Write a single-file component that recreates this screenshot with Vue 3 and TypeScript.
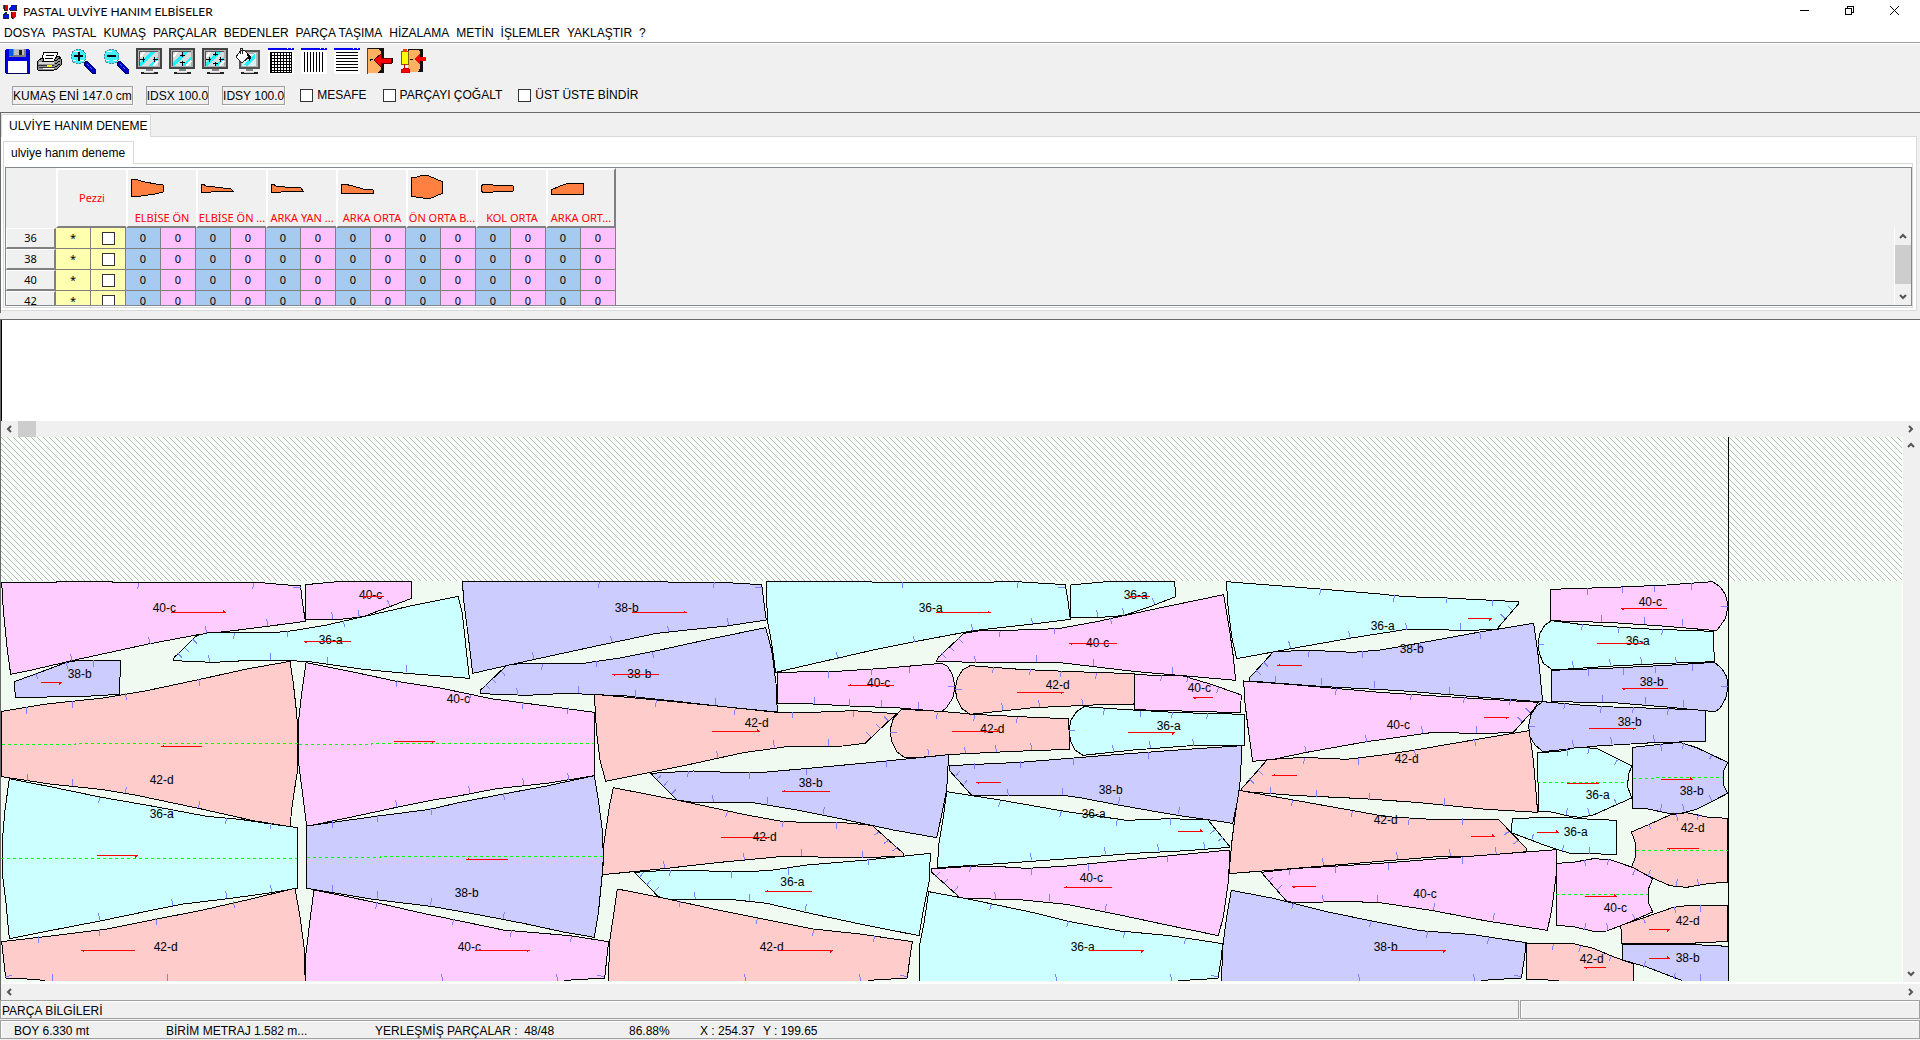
<script setup lang="ts">
type Size = '36-a' | '38-b' | '40-c' | '42-d'

interface Piece {
  size: Size
  outline: string
  label: [number, number]
  // tail x, y, head x, barb side (-1 above, 1 below)
  grain: [number, number, number, number]
  notches: string
  fold?: string
}

interface Strip {
  x: number
  pieces: Piece[]
}

interface GarmentPart {
  name: string
  outline: string
}

const fills: Record<Size, string> = {
  '36-a': '#ccffff',
  '38-b': '#ccccff',
  '40-c': '#ffccff',
  '42-d': '#ffcccc',
}

const menus = ['DOSYA', 'PASTAL', 'KUMAŞ', 'PARÇALAR', 'BEDENLER', 'PARÇA TAŞIMA', 'HİZALAMA', 'METİN', 'İŞLEMLER', 'YAKLAŞTIR', '?']
const readouts = ['KUMAŞ ENİ 147.0 cm', 'IDSX 100.0', 'IDSY 100.0']
const options = ['MESAFE', 'PARÇAYI ÇOĞALT', 'ÜST ÜSTE BİNDİR']
const sizes = ['36', '38', '40', '42']

const parts: GarmentPart[] = [
  { name: 'ELBİSE ÖN', outline: '0,7 1,5 3,5 14,8 25,10 32,11 32,18 24,20 10,22 1,23 0,22' },
  { name: 'ELBİSE ÖN ...', outline: '0,11 2,10 5,12 14,13 30,15 32,17 20,17 10,18 0,19' },
  { name: 'ARKA YAN ...', outline: '0,11 2,10 5,12 14,13 30,14 32,17 20,17 10,18 0,19' },
  { name: 'ARKA ORTA', outline: '0,11 3,10 12,12 22,15 32,16 32,19 0,19' },
  { name: 'ÖN ORTA B...', outline: '0,3 6,3 12,1 18,2 32,8 31,12 31,15 32,19 18,25 12,24 5,23 0,22' },
  { name: 'KOL ORTA', outline: '3,10 0,12 0,17 3,19 12,18 32,17 32,12 12,11' },
  { name: 'ARKA ORT...', outline: '0,16 9,12 18,9 32,9 32,20 20,20 1,21' },
]

const displayArrows = [
  { title: 'Yatay sığdır', d: 'M4 11h5M7 9v5M22 11h-5M18 9v5' },
  { title: 'Dikey sığdır', d: 'M13 4v5M11 7h5M13 18v-5M11 14h5' },
  { title: 'Tümünü sığdır', d: 'M4 11h5M7 9v5M22 11h-5M18 9v5M13 4v4M11 6h5M13 18v-4M11 15h5' },
]

const ruledLines = [4, 7, 10, 13, 16, 19, 22]

// Marker plan: 3 plan units per screen pixel, four side-by-side strips.
const strips: Strip[] = [
  {
    x: 0,
    pieces: [
      { size: '40-c', outline: '5,37 168,37 168,34 336,34 336,37 783,38 828,42 876,46 902,48 905,80 916,154 810,168 700,182 600,193 445,222 220,271 100,299 32,313 22,240 10,120', label: [458, 125], grain: [514, 127, 675, -1], notches: 'M416 38l-3 18M761 38l-3 18M880 52h22M800 148l4 20M616 169l4 20M446 202l5 20M212 253l4 20' },
      { size: '40-c', outline: '916,44 1014,35 1235,35 1235,85 1140,121 1090,140 1020,148 916,148', label: [1077, 88], grain: [1152, 79, 1090, 1], notches: 'M995 126l3 20M1074 121l4 20M1162 90l8 18' },
      { size: '36-a', outline: '590,197 625,188 820,188 880,182 980,165 1090,140 1240,106 1374,79 1387,130 1408,325 1220,310 1090,298 930,275 870,272 735,272 640,277 560,274 520,271 523,262', label: [956, 223], grain: [1053, 214, 913, 1], notches: 'M704 188l-4 18M863 182v18M1030 152l4 18M578 208l13 13M554 233l13 12M533 250l13 13M625 255l4 20M811 250v20M982 262v20M1219 286v20' },
      { size: '38-b', outline: '43,335 120,307 200,277 240,271 362,271 358,373 240,380 46,382', label: [203, 323], grain: [123, 338, 183, 1], notches: 'M106 308l7 18M199 277l4 20M281 271v20' },
      { size: '42-d', outline: '5,424 140,402 310,384 440,362 600,328 740,297 870,274 880,340 890,430 893,480 893,600 885,650 876,710 870,770 760,752 600,716 410,676 310,659 150,642 5,620', label: [449, 641], grain: [606, 529, 487, -1], notches: 'M80 412v20M218 394v20M376 370l4 20M596 328l4 20M82 612v20M218 628v20M379 650l-3 20M599 694l-4 20', fold: 'M5 523H226V520H893' },
      { size: '40-c', outline: '918,278 1050,304 1190,334 1325,355 1440,379 1480,387 1640,408 1783,427 1783,617 1640,640 1490,656 1380,677 1300,690 1190,712 1060,740 920,769 905,650 896,580 896,450 905,370', label: [1340, 398], grain: [1182, 514, 1302, 1], notches: 'M1192 330l-4 20M1412 374l-4 20M1570 396l-3 20M1705 411l-3 20M1568 625l4 20M1703 610l4 20M1406 649l4 20M1187 690l4 20', fold: 'M896 523H1114V520H1783' },
      { size: '36-a', outline: '28,626 160,652 300,681 460,709 620,739 720,748 800,760 892,773 892,955 800,970 700,984 550,1002 440,1024 300,1053 160,1080 28,1106 18,1000 8,920 8,800 15,720', label: [449, 743], grain: [291, 857, 411, 1], notches: 'M300 680l-4 18M680 745l-4 18M814 760l-3 18M520 720l-4 18M295 1029l4 20M515 988l4 20M677 963l3 20M811 945l4 20', fold: 'M3 865H892' },
      { size: '38-b', outline: '920,768 1120,740 1290,718 1380,697 1510,672 1640,648 1783,617 1795,690 1807,780 1810,860 1807,910 1795,1030 1783,1102 1690,1086 1570,1060 1440,1035 1300,1010 1120,988 1000,968 920,955', label: [1364, 980], grain: [1524, 868, 1402, -1], notches: 'M997 754v20M1132 736v20M1292 714l3 20M1510 670l4 20M997 945v20M1132 963v20M1295 985l-4 20M1513 1026l-4 20', fold: 'M920 862H1140V859H1810' },
      { size: '42-d', outline: '5,1115 170,1096 320,1077 460,1049 600,1022 740,990 885,955 900,1040 912,1130 916,1240 140,1240 134,1231 80,1227 17,1224 12,1180', label: [461, 1143], grain: [405, 1142, 247, 1], notches: 'M116 1098v20M298 1078v20M467 1044l4 20M700 994l4 20M158 1212v20M502 1212v20M16 1221l20 -5' },
      { size: '40-c', outline: '942,960 1120,996 1260,1028 1380,1053 1510,1080 1710,1097 1826,1115 1822,1150 1814,1224 1695,1231 1690,1240 916,1240 918,1150 930,1050', label: [1373, 1143], grain: [1425, 1142, 1586, 1], notches: 'M1131 996l-4 20M1361 1046l-4 20M1535 1080l-4 20M1715 1097l-4 20M1324 1212l4 20M1669 1212l4 20M1791 1216l22 4' },
    ],
  },
  {
    x: 1380,
    pieces: [
      { size: '38-b', outline: '7,35 603,35 645,37 800,38 905,44 912,100 919,150 800,168 700,178 590,190 400,230 220,269 38,310 25,200 12,100', label: [464, 125], grain: [516, 127, 677, -1], notches: 'M418 35l-3 18M763 35l-3 18M884 52h21M802 145l4 20M622 167l5 20M451 197l6 20M217 247l5 20' },
      { size: '38-b', outline: '140,286 180,281 370,280 480,264 600,240 760,205 917,173 935,240 948,340 952,426 800,411 650,394 500,378 320,370 200,376 61,371 62,360', label: [502, 323], grain: [597, 314, 460, 1], notches: 'M248 281l-4 18M410 274v18M577 245l4 18M123 303l13 14M97 328l13 12M77 345l13 12M170 354l3 20M355 349v20M527 360v20M767 385v20' },
      { size: '36-a', outline: '919,35 1540,37 1670,35 1816,44 1825,100 1831,148 1720,162 1540,182 1380,212 1240,240 1100,272 947,307 935,220 922,150', label: [1376, 125], grain: [1428, 127, 1589, -1], notches: 'M1329 35l-3 18M1675 35l-4 18M1794 52h22M1714 143l4 20M1534 162l4 20M1360 197l4 20M1129 247l6 20' },
      { size: '40-c', outline: '953,307 1130,304 1270,295 1410,283 1445,280 1462,288 1478,315 1485,350 1478,385 1460,412 1445,425 1320,414 1170,408 1040,401 953,401', label: [1221, 351], grain: [1302, 346, 1168, -1], notches: 'M1105 304v20M1234 298v18M1348 290v18M1465 350h22M1063 380v22M1168 386v22M1265 390v22M1375 396v20' },
      { size: '42-d', outline: '403,373 590,390 820,413 950,427 1060,427 1180,422 1308,431 1300,440 1215,520 1150,528 980,530 850,548 690,583 437,634 420,570 410,490', label: [854, 471], grain: [756, 484, 897, -1], notches: 'M590 390l-4 20M826 414l-3 20M998 427v18M1181 422v18M1273 440l13 13M1249 463l14 13M1219 487l14 13M939 510l4 20M770 544l4 20M1105 507v22' },
      { size: '42-d', outline: '1325,418 1440,424 1560,434 1740,443 1826,446 1829,538 1660,544 1480,553 1380,562 1335,564 1310,545 1295,515 1290,480 1300,445', label: [1561, 488], grain: [1476, 484, 1615, -1], notches: 'M1290 488h20M1403 536l4 20M1513 530l4 20M1606 526l4 20M1712 519l3 20M1432 428l-3 18M1545 434l-4 18M1672 440l-3 20' },
      { size: '38-b', outline: '572,610 700,603 780,606 920,606 1080,592 1280,573 1466,554 1460,660 1444,740 1430,803 1300,780 1150,748 1000,718 880,698 700,697 650,690', label: [1016, 650], grain: [1110, 664, 970, -1], notches: 'M686 602l-4 18M868 607v20M1039 596v18M1279 570v20M590 628l14 -12M612 647l12 -14M635 672l13 -14M757 676l4 20M922 682v20M1093 712l-3 20' },
      { size: '42-d', outline: '460,653 650,690 860,735 970,755 1080,758 1160,759 1236,766 1330,850 1332,858 1220,863 1110,863 1040,859 960,860 780,877 620,895 428,914 432,820 448,710', label: [878, 812], grain: [783, 802, 922, 1], notches: 'M803 722l-6 18M970 754l-3 18M1129 757v20M1244 795l14 -10M1272 820l15 -10M1297 843l14 -10M850 850l4 20M1024 838v20M1207 844v20M611 874l3 20' },
      { size: '36-a', outline: '523,907 620,901 870,905 940,900 1040,885 1220,870 1411,850 1408,930 1390,1020 1377,1097 1200,1062 1050,1030 920,1000 820,989 620,987 595,980', label: [961, 947], grain: [1056, 964, 919, -1], notches: 'M632 901l-4 18M814 904v20M985 894v20M1225 868v18M540 920l12 -14M560 945l12 -14M583 966l13 -14M703 966l3 20M868 972v20M1039 1002l-3 20' },
      { size: '42-d', outline: '472,957 600,982 760,1017 900,1045 1060,1077 1200,1092 1357,1115 1350,1160 1342,1224 1225,1231 1220,1240 446,1240 448,1120 460,1040', label: [899, 1143], grain: [955, 1142, 1116, 1], notches: 'M661 994l-4 18M892 1045l-4 18M1061 1077l-3 20M1244 1098l-4 18M853 1212l4 20M1198 1212l4 20M1320 1216l22 4' },
    ],
  },
  {
    x: 2760,
    pieces: [
      { size: '36-a', outline: '452,45 550,36 764,35 767,80 690,110 610,137 540,142 452,142', label: [611, 88], grain: [690, 79, 628, 1], notches: 'M530 120l3 20M608 115l4 20M696 84l9 18' },
      { size: '40-c', outline: '132,190 180,182 350,179 420,175 530,155 680,122 911,74 930,190 940,260 947,331 800,318 640,304 430,279 200,278 49,274 55,262', label: [498, 230], grain: [591, 220, 450, 1], notches: 'M241 182l-4 18M404 175v18M571 145l4 18M115 204l13 14M89 230l13 12M65 250l12 13M163 258l4 20M349 255v22M520 267v22M757 291v22' },
      { size: '42-d', outline: '150,287 300,298 460,305 643,311 642,402 520,405 340,413 150,433 125,415 110,385 106,355 112,325 128,300', label: [377, 356], grain: [291, 367, 429, 1], notches: 'M105 357h20M221 292l-4 18M332 298l-4 18M424 304l-3 18M530 308l-4 18M245 400l4 20M356 391l3 20M485 386l4 20' },
      { size: '40-c', outline: '643,314 790,318 880,345 964,375 961,428 643,419', label: [803, 367], grain: [879, 382, 820, 1], notches: 'M725 314l-3 18M806 320l-6 16M896 350l-6 18' },
      { size: '36-a', outline: '492,410 620,419 780,428 973,433 973,526 800,528 640,540 489,556 465,540 452,515 447,482 453,450 470,425', label: [710, 480], grain: [624, 488, 762, 1], notches: 'M446 481h19M553 416l-3 18M663 422l-3 18M758 426l-4 18M863 430l-3 16M577 524l4 20M688 514l4 20M818 507l3 20' },
      { size: '38-b', outline: '87,587 300,577 560,556 800,538 965,527 962,620 955,680 938,760 760,734 600,706 480,683 430,676 300,678 155,676 87,600', label: [536, 671], grain: [243, 637, 171, 1], notches: 'M163 580v18M301 573v20M461 565v20M686 546v20M108 618l10 -14M132 643l10 -14M262 658l4 20M428 655v20M599 682l-4 20M779 711l-4 20' },
      { size: '36-a', outline: '80,665 240,690 440,725 620,751 750,746 864,750 928,828 929,832 800,842 640,850 460,865 250,880 53,893 55,830 70,740', label: [485, 743], grain: [774, 784, 846, -1], notches: 'M241 692l-5 18M424 724l-5 18M592 748l-3 20M752 745v20M871 790l14 -10M894 813l14 -10M331 850l4 20M553 832l4 20M712 822l4 20M851 816l3 20' },
      { size: '40-c', outline: '33,897 170,888 240,890 320,895 430,889 560,876 740,858 929,840 926,930 910,1040 895,1097 750,1067 600,1035 440,1003 300,989 122,985 33,905', label: [479, 935], grain: [576, 952, 436, -1], notches: 'M152 889l-3 18M335 894v20M506 882v20M743 856v20M47 920l13 -14M70 942l13 -14M101 964l13 -14M224 966l3 20M389 972v20M559 1003l-3 20' },
      { size: '36-a', outline: '26,965 150,988 350,1030 450,1055 600,1083 750,1097 908,1121 903,1170 894,1225 777,1232 770,1240 -2,1240 0,1120 12,1060', label: [452, 1143], grain: [508, 1142, 669, 1], notches: 'M214 1003l-5 18M446 1054l-6 18M614 1085l-4 20M797 1105l-4 18M406 1212l4 20M751 1212l4 20M872 1216l22 4' },
      { size: '36-a', outline: '919,35 1200,57 1380,72 1455,80 1580,84 1795,95 1795,102 1730,178 1650,181 1460,178 1300,203 1130,233 950,266 935,200 925,120', label: [1352, 179], grain: [1644, 146, 1713, 1], notches: 'M1203 58l-5 18M1424 75l-4 20M1582 82l-4 18M1719 90l-3 18M1763 107l14 14M1742 132l14 14M1457 160l4 20M1621 158v22M1286 184l5 20M1106 214l6 20' },
      { size: '38-b', outline: '1060,245 1170,241 1300,247 1380,240 1440,230 1680,186 1841,160 1855,260 1868,396 1700,383 1440,362 1200,349 988,333 990,322', label: [1439, 248], grain: [1146, 286, 1075, -1], notches: 'M1168 242l-4 18M1328 244v20M1499 218l4 20M1679 187l4 20M1030 276l14 14M1009 302l14 13M1067 318v20M1204 325v20M1363 333v20M1588 350v22' },
      { size: '40-c', outline: '971,333 1120,344 1380,367 1640,384 1855,397 1840,420 1780,487 1690,491 1540,487 1340,515 1160,547 1060,568 998,574 985,480 975,400', label: [1400, 476], grain: [1692, 442, 1764, 1], notches: 'M1250 354l-4 20M1475 373l-4 18M1634 382l-4 18M1772 388l-4 18M1817 414l14 14M1792 441l14 14M1504 468l4 20M1669 468v22M1336 495l5 20M1154 527l5 20' },
      { size: '42-d', outline: '1042,569 1150,562 1280,568 1380,556 1480,541 1660,510 1828,482 1840,570 1853,727 1700,718 1500,698 1330,686 1120,676 962,664 966,655', label: [1424, 579], grain: [1131, 616, 1060, -1], notches: 'M1154 563l-4 18M1315 565v20M1483 540l5 20M1663 507l4 20M1015 600l13 14M988 626l14 14M1051 652v20M1189 660v20M1348 668v22M1573 685v22' },
      { size: '42-d', outline: '957,661 1120,690 1300,722 1400,740 1535,748 1735,748 1820,836 1820,845 1680,858 1540,861 1380,874 1150,893 927,911 935,820 945,740', label: [1361, 761], grain: [1654, 799, 1722, -1], notches: 'M1118 691l-5 18M1298 722l-5 18M1468 744l-3 20M1628 744v20M1753 795l15 -10M1780 822l14 -10M1207 865l4 20M1429 846l4 20M1588 838l4 20M1726 832l3 20' },
      { size: '40-c', outline: '1024,907 1130,895 1240,889 1380,880 1560,866 1740,852 1909,839 1908,920 1895,1020 1882,1081 1700,1053 1540,1022 1380,998 1300,995 1120,997 1100,994', label: [1480, 983], grain: [1188, 949, 1117, 1], notches: 'M1108 896v18M1246 888v20M1405 880v20M1627 862v20M1045 936l13 -14M1072 960l13 -14M1207 976l4 20M1373 976v20M1544 1000l-4 20M1723 1030l-3 20' },
      { size: '38-b', outline: '934,961 1060,985 1220,1025 1380,1058 1500,1082 1660,1094 1818,1118 1814,1160 1804,1224 1686,1231 1680,1240 905,1240 907,1140 920,1040', label: [1361, 1143], grain: [1414, 1142, 1575, 1], notches: 'M1120 1000l-5 18M1354 1052l-5 18M1523 1084l-4 20M1706 1103l-4 18M1315 1212l4 20M1660 1212l4 20M1782 1216l22 4' },
    ],
  },
  {
    x: 4140,
    pieces: [
      { size: '40-c', outline: '511,58 700,52 860,45 997,35 1020,50 1037,75 1044,108 1037,145 1010,182 860,169 700,158 511,152', label: [776, 107], grain: [861, 115, 724, 1], notches: 'M622 54v20M727 50v20M824 47v20M934 40v20M1024 109h20M665 136v20M793 142v20M907 148v20' },
      { size: '36-a', outline: '515,152 600,163 780,176 1000,184 1003,275 860,280 700,288 518,300 490,280 478,250 474,220 480,190 495,165', label: [737, 224], grain: [651, 220, 789, -1], notches: 'M475 223h18M608 163l-4 18M718 172l-3 18M848 178l-3 18M577 274l4 20M688 266l4 20M782 262l4 20M886 260l4 20' },
      { size: '38-b', outline: '515,301 700,294 860,286 1003,277 1025,295 1040,320 1044,350 1037,385 1020,415 1005,425 860,411 700,398 515,395', label: [779, 347], grain: [864, 355, 727, 1], notches: 'M626 298v20M731 294v20M827 290v18M938 282v20M1024 349h20M668 376v20M797 382v20M911 390v20' },
      { size: '38-b', outline: '488,395 600,405 700,411 860,416 977,421 977,514 820,518 650,528 489,545 465,525 450,500 446,468 452,435 470,408', label: [713, 467], grain: [627, 475, 765, 1], notches: 'M446 468h18M555 400l-4 18M665 408l-4 20M761 412l-4 18M866 414l-4 20M577 511l4 20M692 502l4 20M820 496l4 20' },
      { size: '36-a', outline: '473,548 540,544 590,532 650,535 755,588 745,615 743,650 755,684 640,735 600,742 560,737 510,725 475,723', label: [617, 686], grain: [561, 640, 653, -1], notches: 'M560 537l3 20M628 534l-5 18M712 570l-8 14M562 714l-3 20M623 714l5 20M703 687l7 16', fold: 'M472 637H742' },
      { size: '38-b', outline: '758,532 830,524 900,517 950,533 1043,577 1030,605 1030,645 1043,670 950,718 900,731 860,729 800,716 758,715', label: [899, 674], grain: [843, 628, 936, -1], notches: 'M841 522l4 20M911 520l-5 18M997 553l-8 14M845 703l-4 20M908 703l5 20M988 676l8 16', fold: 'M758 625H828V622H1030' },
      { size: '36-a', outline: '397,745 550,742 620,747 710,751 710,853 570,850 500,828 394,788', label: [551, 797], grain: [472, 787, 534, -1], notches: 'M460 793l-5 18M551 824l-4 20M628 831v20M372 794l14 -10' },
      { size: '42-d', outline: '754,786 810,762 870,735 920,728 980,741 1043,745 1043,937 990,940 920,952 870,947 820,925 754,892 767,860 767,820', label: [902, 785], grain: [957, 835, 864, 1], notches: 'M805 762l8 16M889 732l4 20M956 733l-4 18M805 918l6 -18M889 948l3 -20M952 926l4 20', fold: 'M767 841H1044' },
      { size: '40-c', outline: '529,880 580,877 640,866 690,869 760,893 818,926 804,960 804,995 818,1026 740,1060 680,1083 640,1084 580,1070 529,1066', label: [671, 1026], grain: [615, 979, 708, -1], notches: 'M613 869l4 20M686 868l-4 18M766 898l-8 18M617 1059l-3 20M680 1059l4 20M758 1032l7 16', fold: 'M529 973H804' },
      { size: '42-d', outline: '721,1067 800,1040 880,1012 930,1006 1043,1006 1043,1115 945,1118 945,1121 726,1121 724,1080', label: [887, 1064], grain: [807, 1079, 867, 1], notches: 'M790 1044l6 16M883 1012l4 18M962 1006v20' },
      { size: '42-d', outline: '440,1121 580,1121 640,1135 700,1160 760,1182 760,1240 540,1240 536,1231 440,1228', label: [599, 1178], grain: [678, 1192, 615, 1], notches: 'M520 1121l-3 20M602 1128l-6 18M695 1158l-8 16' },
      { size: '38-b', outline: '728,1124 945,1124 1044,1129 1044,1240 905,1240 905,1231 860,1214 800,1191 728,1170', label: [887, 1175], grain: [807, 1165, 867, -1], notches: 'M796 1174l-5 20M886 1208l-4 20M962 1212v20' },
    ],
  },
]

function grainPath([tail, y, head, side]: Piece['grain']): string {
  const back = head > tail ? -6 : 6
  return `M${tail} ${y}H${head}l${back} ${side * 5}`
}
</script>

<template>
  <div class="window">
    <header class="titlebar">
      <svg class="app-icon" width="14" height="16" viewBox="0 0 14 16" shape-rendering="crispEdges">
        <path d="M0 1h5v6H2L0 5z" fill="#e00000" /><path d="M6 4l2-2V1h5v5H6z" fill="#0018d8" /><path d="M0 10l2-2h2v2h2v5H0z" fill="#0018d8" /><path d="M8 8h5v4l-2 3H9v-4H8z" fill="#e00000" />
        <path d="M1 1v5h3M7 6h6V1M3 8v2H0v4h6M8 8v4l2 3" fill="none" stroke="#222" />
      </svg>
      <h1 class="title">PASTAL ULVİYE HANIM ELBİSELER</h1>
      <div class="controls">
        <button type="button" aria-label="Simge durumuna küçült"><svg width="11" height="11"><path d="M1 5.500h9" /></svg></button>
        <button type="button" aria-label="Önceki boyut"><svg width="11" height="11"><path d="M1.500 3.500h6v6h-6zM3.500 3.500v-2h6v6h-2" /></svg></button>
        <button type="button" aria-label="Kapat"><svg width="11" height="11"><path class="smooth" d="M1 1l9 9M10 1l-9 9" /></svg></button>
      </div>
    </header>

    <nav class="menubar">
      <button v-for="menu in menus" :key="menu" type="button">{{ menu }}</button>
    </nav>

    <section class="tools">
      <div class="toolbar">
        <button type="button" aria-label="Kaydet">
          <svg viewBox="-1 0 26 26" shape-rendering="crispEdges">
            <path d="M1 1h22l2 2v23H1l-1-1V2z" fill="#0000e8" stroke="none" />
            <path d="M4 1h17v8H4z" fill="#808080" /><path d="M4 1h4v7H4z" fill="#0060e0" /><path d="M9 1h10v6H9z" fill="#c0c0c0" /><path d="M14 2h3v5h-3z" fill="#222" />
            <path d="M3 13h19v12H3z" fill="#fff" /><path d="M.5 2v22M1 25.500h24V3" fill="none" stroke="#000060" />
          </svg>
        </button>
        <button type="button" aria-label="Yazdır">
          <svg viewBox="0 0 26 26" shape-rendering="crispEdges">
            <path d="M7 4h14l-3 9H4z" fill="#fff" stroke="#000" /><path d="M9 7h8M8 10h8" stroke="#000" />
            <path d="M1 13l4-3h2l-1 3h11l3-5h2l2 3v6l-4 4-3 1H1l-1-2v-5z" fill="#909090" stroke="#000" />
            <path d="M2 14h15v2H2z" fill="#d8d8d8" /><path d="M18 13l5-3M18 16l5-3M18 19l5-3" stroke="#000" /><path d="M1 17h16M2 19h16" stroke="#333" />
            <path d="M10 17h5v2h-5z" fill="#ff0" /><path d="M6 20h11" stroke="#fff" />
          </svg>
        </button>
        <button v-for="kind in ['Yakınlaştır', 'Uzaklaştır']" :key="kind" type="button" :aria-label="kind">
          <svg viewBox="0 0 26 26" shape-rendering="crispEdges">
            <path d="M14 15l3-2 9 9v3h-4l-8-8z" fill="#0000c8" stroke="#000060" /><path d="M17 16l6 6" stroke="#4080ff" stroke-dasharray="1 1" />
            <circle cx="8.500" cy="8.500" r="7.500" fill="#40f0ff" stroke="#508090" stroke-dasharray="2 1" />
            <path d="M4 3h5M10 12h4M3 12h3" stroke="#fff" />
            <path d="M4 8h9" stroke="#000" stroke-width="2" /><path v-if="kind === 'Yakınlaştır'" d="M8.500 3.500v9" stroke="#000" stroke-width="2" />
          </svg>
        </button>
        <button v-for="view in displayArrows" :key="view.title" type="button" :aria-label="view.title">
          <svg viewBox="0 0 26 26" shape-rendering="crispEdges">
            <path d="M1 1h24v19H1z" fill="#b0b0b0" stroke="#444" stroke-width="2" stroke-linejoin="round" />
            <path d="M3 3h19v15H3z" fill="#d4dcdc" /><path d="M3 16l12-13h5L6 18H3zM12 18l10-10v4l-6 6z" fill="#20f0ff" />
            <path d="M4 9l5-6M17 18l5-5" stroke="#fff" stroke-width="2" /><path d="M3.500 18V3.500H22" fill="none" stroke="#555" />
            <path :d="view.d" fill="none" stroke="#000" />
            <path d="M10 21h7v2h-7z" fill="#888" /><path d="M5 24h17v2H5z" fill="#222" /><path d="M8 24h10" stroke="#ccc" />
          </svg>
        </button>
        <button type="button" aria-label="Ekranı temizle">
          <svg viewBox="0 0 26 26" shape-rendering="crispEdges">
            <path d="M9 3h15v17H5v-9z" fill="#b0b0b0" stroke="#555" stroke-width="2" /><path d="M8 8l13-3v13H7z" fill="#d8f0f0" /><path d="M9 17L20 5v5l-8 8z" fill="#20f0ff" />
            <path d="M6 2L1 9l6 6 8-7-6-6z" fill="#fff" stroke="#222" /><path d="M5 6V1l2-1v6" fill="none" stroke="#222" /><path d="M12 5l4 3-1 6-2-4z" fill="#000" />
            <path d="M11 21h7v2h-7z" fill="#888" /><path d="M6 24h17v2H6z" fill="#222" /><path d="M9 24h10" stroke="#ccc" />
          </svg>
        </button>
        <button v-for="rule in ['Kareli', 'Dikey çizgili', 'Yatay çizgili']" :key="rule" type="button" :aria-label="rule">
          <svg viewBox="0 0 26 26" shape-rendering="crispEdges">
            <path d="M0 0h26v26H0z" fill="#fff" /><path d="M0 0h26v2H0z" fill="#0000f0" /><path d="M19 0h1M23 0h1" stroke="#fff" />
            <g stroke="#000">
              <template v-for="n in ruledLines" :key="n">
                <path v-if="rule !== 'Yatay çizgili'" :d="`M${n - 1}.5 4v20`" />
                <path v-if="rule !== 'Dikey çizgili'" :d="`M2 ${n}.5h22`" />
              </template>
              <path v-if="rule === 'Kareli'" d="M2.500 4.500h21v20h-21z" fill="none" />
            </g>
          </svg>
        </button>
        <button type="button" aria-label="Kapat ve çık">
          <svg viewBox="0 0 26 26" shape-rendering="crispEdges">
            <path d="M1 0h16v25H1z" fill="#111" /><path d="M1 1h11l2 3v17l-3 4H1z" fill="#ffb060" /><path d="M.5 0v26" stroke="#604020" />
            <path d="M3 13v-2h3" fill="none" stroke="#000" /><path d="M7 12l7-6v4h10v5H14v4z" fill="#f00" stroke="#600" /><path d="M25.500 10v5" stroke="#000" />
          </svg>
        </button>
        <button type="button" aria-label="Çıkış">
          <svg viewBox="0 0 26 26" shape-rendering="crispEdges">
            <path d="M8 1h15v23H8z" fill="#111" /><path d="M9 2h9l2 2v16l-2 4H8z" fill="#ffb060" />
            <path d="M2 3h6v13H1V4z" fill="#ff0" stroke="#806000" /><path d="M3 1h4v3H3z" fill="#f04000" /><path d="M4 16v5M1 22l4-2 4 1v3H1z" fill="#f00" stroke="#c00" />
            <path d="M10 12v-1h3" fill="none" stroke="#000" /><path d="M14 11l6-5v3h6v4h-6v4z" fill="#f00" />
          </svg>
        </button>
      </div>

      <div class="settings">
        <span v-for="readout in readouts" :key="readout" class="readout">{{ readout }}</span>
        <label v-for="option in options" :key="option" class="option"><input type="checkbox" />{{ option }}</label>
      </div>
    </section>

    <section class="orders">
      <div class="tab-row outer"><button type="button" class="tab">ULVİYE HANIM DENEME</button></div>
      <div class="tab-page">
        <div class="tab-row inner"><button type="button" class="tab">ulviye hanım deneme</button></div>
        <div class="tab-body">
          <div class="grid">
            <table>
              <colgroup><col class="head-col" /><col v-for="n in 16" :key="n" /></colgroup>
              <thead>
                <tr>
                  <td class="corner"></td>
                  <th colspan="2" class="pezzi">Pezzi</th>
                  <th v-for="part in parts" :key="part.name" colspan="2">
                    <div class="part">
                      <svg width="34" height="28" viewBox="0 0 34 28" shape-rendering="crispEdges"><polygon :points="part.outline" /></svg>
                      <span>{{ part.name }}</span>
                    </div>
                  </th>
                </tr>
              </thead>
              <tbody>
                <tr v-for="size in sizes" :key="size">
                  <th scope="row">{{ size }}</th>
                  <td class="mark">*</td>
                  <td class="mark"><input type="checkbox" :aria-label="`Beden ${size}`" /></td>
                  <template v-for="part in parts" :key="part.name">
                    <td class="blue">0</td>
                    <td class="pink">0</td>
                  </template>
                </tr>
              </tbody>
            </table>
            <div class="grid-scroll">
              <button type="button" class="arrow" aria-label="Yukarı"><svg width="9" height="9"><path d="M1 6l3-3 3 3" /></svg></button>
              <div class="thumb"></div>
              <button type="button" class="arrow" aria-label="Aşağı"><svg width="9" height="9"><path d="M1 3l3 3 3-3" /></svg></button>
            </div>
          </div>
        </div>
      </div>
    </section>

    <section class="workspace">
      <div class="tray"></div>
      <div class="hscroll">
        <button type="button" class="arrow" aria-label="Sola"><svg width="9" height="9"><path d="M6 1L3 4l3 3" /></svg></button>
        <div class="thumb"></div>
        <button type="button" class="arrow last" aria-label="Sağa"><svg width="9" height="9"><path d="M3 1l3 3-3 3" /></svg></button>
      </div>
      <div class="plan-row">
        <div class="plan">
          <svg class="hatch" width="100%" height="144" shape-rendering="crispEdges">
            <defs>
              <pattern id="hatch" width="6" height="6" patternUnits="userSpaceOnUse">
                <path d="M0 0h1v1H0zM1 1h1v1H1zM2 2h1v1H2zM3 3h1v1H3zM4 4h1v1H4zM5 5h1v1H5z" fill="#b4bcb4" />
              </pattern>
            </defs>
            <rect width="100%" height="144" fill="url(#hatch)" />
          </svg>
          <svg class="marker" width="1730" height="544" viewBox="3 -399 5190 1632">
            <g v-for="strip in strips" :key="strip.x" :transform="`translate(${strip.x} 0)`">
              <g v-for="(piece, i) in strip.pieces" :key="i">
                <polygon class="outline" :points="piece.outline" :fill="fills[piece.size]" />
                <path class="notch" :d="piece.notches" />
                <path v-if="piece.fold" class="fold" :d="piece.fold" />
              </g>
            </g>
            <g v-for="strip in strips" :key="strip.x" :transform="`translate(${strip.x} 0)`">
              <g v-for="(piece, i) in strip.pieces" :key="i">
                <text :x="piece.label[0]" :y="piece.label[1]">{{ piece.size }}</text>
                <path class="grain" :d="grainPath(piece.grain)" />
              </g>
            </g>
            <path class="fabric-end" d="M5186 -399V1240" />
          </svg>
        </div>
        <div class="vscroll">
          <button type="button" class="arrow" aria-label="Yukarı"><svg width="9" height="9"><path d="M1 6l3-3 3 3" /></svg></button>
          <button type="button" class="arrow" aria-label="Aşağı"><svg width="9" height="9"><path d="M1 3l3 3 3-3" /></svg></button>
        </div>
      </div>
      <div class="hscroll bottom">
        <button type="button" class="arrow" aria-label="Sola"><svg width="9" height="9"><path d="M6 1L3 4l3 3" /></svg></button>
        <button type="button" class="arrow last" aria-label="Sağa"><svg width="9" height="9"><path d="M3 1l3 3-3 3" /></svg></button>
      </div>
    </section>

    <footer class="status">
      <div class="status-row">
        <div class="panel wide">PARÇA BİLGİLERİ</div>
        <div class="panel narrow"></div>
      </div>
      <div class="panel totals">
        <span class="boy">BOY 6.330 mt</span>
        <span class="metraj">BİRİM METRAJ 1.582 m...</span>
        <span class="placed">YERLEŞMİŞ PARÇALAR :&nbsp; 48/48</span>
        <span class="yield">86.88%</span>
        <span class="pos">X : 254.37</span>
        <span>Y : 199.65</span>
      </div>
    </footer>
  </div>
</template>

<style>
body {
  background: #f0f0f0;
}
</style>

<style scoped>
.window {
  display: flex;
  flex-direction: column;
  height: 100vh;
  overflow: hidden;
  background: #f0f0f0;
  color: #000;
  font: 12px/16px 'Liberation Sans', Arial, sans-serif;
}
.window * {
  box-sizing: border-box;
}
button {
  margin: 0;
  padding: 0;
  border: 0;
  background: none;
  color: inherit;
  font: inherit;
  white-space: nowrap;
}
svg {
  display: block;
}
input[type='checkbox'] {
  appearance: none;
  width: 13px;
  height: 13px;
  margin: 0;
  border: 1px solid #333;
  background: #fff;
}

.titlebar {
  display: flex;
  align-items: center;
  flex: none;
  height: 24px;
  padding: 0 3px;
  background: #fff;
}
.app-icon {
  margin-right: 6px;
}
.title {
  flex: 1;
  margin: 0;
  font: 12px/16px Lato, 'Open Sans', sans-serif;
}
.controls {
  display: flex;
  height: 20px;
  align-self: flex-start;
}
.controls button {
  display: flex;
  align-items: center;
  justify-content: center;
  width: 45px;
}
.controls path {
  fill: none;
  stroke: #000;
  shape-rendering: crispEdges;
}
.controls .smooth {
  shape-rendering: auto;
}

.menubar {
  display: flex;
  flex: none;
  gap: 7px;
  height: 18px;
  padding-left: 4px;
  background: #fff;
}

.tools {
  flex: none;
  height: 70px;
  border-top: 1px solid #a0a0a0;
  box-shadow: inset 0 1px #fff;
}
.toolbar {
  display: flex;
  gap: 7px;
  padding: 5px 4px 0;
}
.toolbar button,
.toolbar svg {
  width: 26px;
  height: 26px;
}
.settings {
  display: flex;
  align-items: center;
  padding: 12px 12px 0;
}
.readout {
  height: 19px;
  margin-right: 13px;
  border: 1px solid #a0a0a0;
  box-shadow: 1px 1px #fff;
  line-height: 19px;
  white-space: nowrap;
}
.option {
  display: flex;
  align-items: center;
  gap: 4px;
  margin: 0 14px 0 2px;
  line-height: 19px;
}

.orders {
  display: flex;
  flex-direction: column;
  flex: none;
  padding: 1px 2px 2px 0;
  border: solid #696969;
  border-width: 1px 0 0 1px;
}
.tab-row {
  display: flex;
  height: 22px;
}
.tab {
  position: relative;
  margin-bottom: -1px;
  border: 1px solid #d9d9d9;
  border-bottom: 0;
  background: #fff;
}
.outer .tab {
  padding: 0 3px 0 7px;
}
.inner .tab {
  padding: 0 8px 0 7px;
}
.tab-page {
  margin-right: 1px;
  border: 1px solid #d9d9d9;
  border-left-color: #fff;
  padding: 4px 3px 2px 1px;
  background: #fff;
}
.tab-body {
  border: 1px solid #d9d9d9;
  background: #fff;
  padding: 3px 0 1px 1px;
}
.grid {
  display: flex;
  justify-content: space-between;
  height: 139px;
  overflow: hidden;
  border: 1px solid #828790;
  background: #f0f0f0;
}
table {
  width: 610px;
  align-self: flex-start;
  table-layout: fixed;
  border-collapse: separate;
  border-spacing: 0;
  font: 11px/14px 'Noto Sans', 'Open Sans', sans-serif;
}
.head-col {
  width: 50px;
}
th,
td {
  padding: 0;
  font-weight: 400;
  text-align: center;
}
thead tr {
  height: 60px;
}
thead th {
  border-top: 2px solid #fff;
  border-left: 2px solid #fff;
  border-bottom: 2px solid #808080;
  color: #f00;
}
thead th:last-child {
  border-right: 2px solid #808080;
}
.part {
  display: flex;
  flex-direction: column;
  align-items: center;
  height: 56px;
  padding-top: 4px;
}
.part svg {
  align-self: flex-start;
  margin-left: 3px;
}
.part polygon {
  fill: #ff8040;
  stroke: #000;
}
.part span {
  margin-top: 9px;
  white-space: nowrap;
}
tbody tr {
  height: 21px;
}
tbody th {
  border: solid #fff;
  border-width: 1px 2px 2px 1px;
  border-right-color: #808080;
  border-bottom-color: #808080;
  background: #f0f0f0;
}
tbody td {
  border: solid #808080;
  border-width: 0 1px 1px 0;
}
tbody input[type='checkbox'] {
  display: block;
  margin: 0 auto;
}
.mark {
  background: #ffffb0;
}
.blue {
  background: #a6caf0;
}
.pink {
  background: #ffc0ff;
}
.grid-scroll {
  display: flex;
  flex-direction: column;
  align-self: flex-end;
  width: 17px;
  height: 77px;
  border-left: 1px solid #fff;
}
.grid-scroll .thumb {
  flex: none;
  height: 39px;
  margin-bottom: auto;
}
.arrow {
  display: flex;
  flex: none;
  align-items: center;
  justify-content: center;
  width: 17px;
  height: 17px;
}
.arrow path {
  fill: none;
  stroke: #555;
  stroke-width: 2;
}
.thumb {
  background: #cdcdcd;
}

.workspace {
  display: flex;
  flex: 1;
  flex-direction: column;
  min-height: 0;
  margin-top: 6px;
  border: solid #696969;
  border-width: 1px 0 0 1px;
}
.tray {
  flex: none;
  height: 101px;
  border-left: 1px solid #000;
  background: #fff;
}
.hscroll {
  display: flex;
  flex: none;
  height: 16px;
  padding-right: 1px;
}
.hscroll .thumb {
  width: 18px;
}
.hscroll .last {
  margin-left: auto;
}
.hscroll.bottom {
  height: 18px;
  border-top: 2px solid #fff;
}
.plan-row {
  display: flex;
  flex: 1;
  min-height: 0;
}
.plan {
  position: relative;
  flex: 1;
  overflow: hidden;
  background: #f0faf0;
}
.hatch {
  background: #fafefa;
}
.marker {
  position: absolute;
  top: 0;
  left: 0;
}
.marker path,
.marker polygon {
  stroke-width: 3;
  shape-rendering: crispEdges;
}
.marker path {
  fill: none;
}
.outline,
.marker .fabric-end {
  stroke: #000;
}
.notch {
  stroke: #8080ff;
}
.fold {
  stroke: #0f0;
  stroke-dasharray: 9 9;
}
.grain {
  stroke: #f00;
}
.marker text {
  font-size: 36px;
}
.vscroll {
  display: flex;
  flex-direction: column;
  justify-content: space-between;
  width: 18px;
  border-left: 1px solid #fff;
}

.status {
  flex: none;
  padding-bottom: 1px;
}
.status-row {
  display: flex;
  gap: 1px;
  margin-bottom: 1px;
}
.panel {
  height: 19px;
  border: 1px solid #a0a0a0;
  box-shadow: inset 1px 1px #fff;
  padding-top: 2px;
  white-space: nowrap;
}
.wide {
  flex: 1520;
  padding-left: 1px;
}
.narrow {
  flex: 399;
}
.totals {
  display: flex;
  padding-left: 13px;
}
.boy {
  width: 152px;
}
.metraj {
  width: 209px;
}
.placed {
  width: 254px;
}
.yield {
  width: 71px;
}
.pos {
  width: 63px;
}
</style>
